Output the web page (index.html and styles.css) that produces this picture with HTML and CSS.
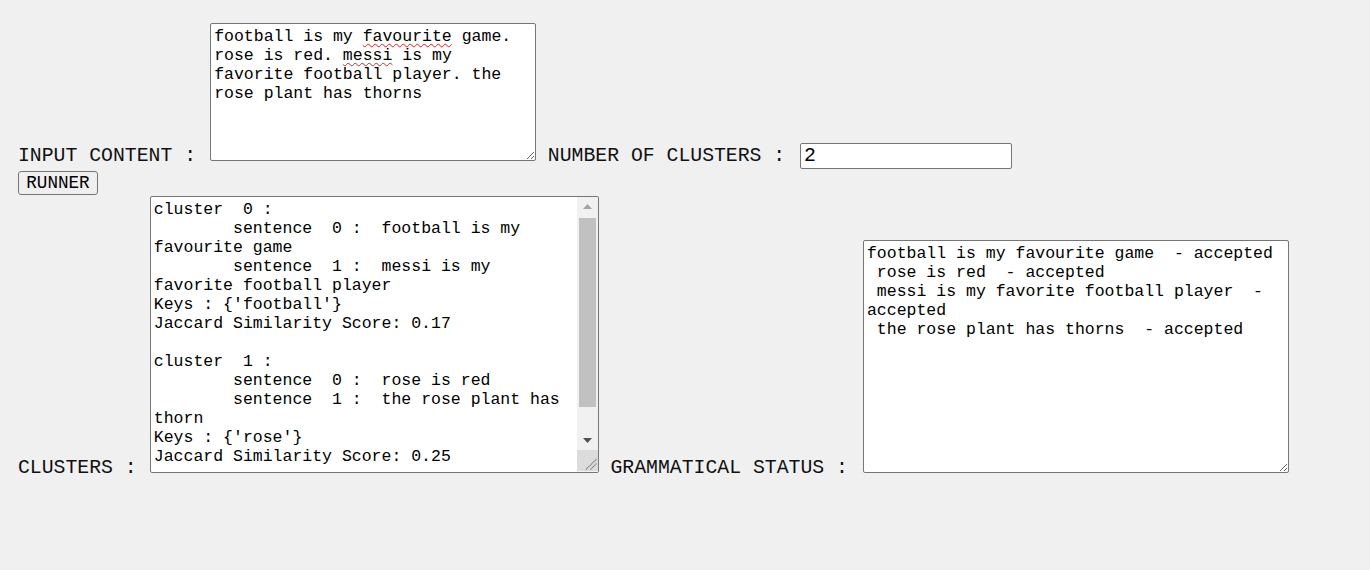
FILE: index.html
```html
<!DOCTYPE html>
<html lang="en">
<head>
<meta charset="utf-8">
<title>Sentence Clustering</title>
<link rel="stylesheet" href="styles.css">
</head>
<body>
<form class="page">
  <div class="row row-input">
    <label class="label">INPUT CONTENT :</label>
    <div class="box box-content">football is my <span class="typo">favourite</span> game. rose is red. <span class="typo">messi</span> is my favorite football player. the rose plant has thorns</div>
    <label class="label">NUMBER OF CLUSTERS :</label>
    <input class="num" type="text" value="2">
  </div>
  <div class="row-btn"><button class="btn" type="button">RUNNER</button></div>
  <div class="row row-output">
    <label class="label">CLUSTERS :</label>
    <div class="box box-clusters">
      <div class="cl-inner">
        <div class="cl-text">cluster  0 :
&#9;sentence  0 :  football is my favourite game
&#9;sentence  1 :  messi is my favorite football player
Keys : {'football'}
Jaccard Similarity Score: 0.17

cluster  1 :
&#9;sentence  0 :  rose is red
&#9;sentence  1 :  the rose plant has thorn
Keys : {'rose'}
Jaccard Similarity Score: 0.25</div>
        <div class="scrollbar">
          <div class="sb-btn"><svg width="9" height="5" viewBox="0 0 9 5"><path d="M0 5 L4.5 0 L9 5 Z" fill="#a3a3a3"/></svg></div>
          <div class="sb-track"><div class="sb-thumb"></div></div>
          <div class="sb-btn"><svg width="9" height="5" viewBox="0 0 9 5"><path d="M0 0 L9 0 L4.5 5 Z" fill="#505050"/></svg></div>
          <div class="sb-corner"><svg width="21" height="21" viewBox="0 0 21 21"><path d="M9 19.5 L19.5 9 M13.5 19.5 L19.5 13.5" stroke="#6a6a6a" stroke-width="1.1" stroke-dasharray="1.2 0.6" fill="none"/></svg></div>
        </div>
      </div>
    </div>
    <label class="label">GRAMMATICAL STATUS :</label>
    <textarea class="box box-status" spellcheck="false">football is my favourite game  - accepted
 rose is red  - accepted
 messi is my favorite football player  - accepted
 the rose plant has thorns  - accepted</textarea>
  </div>
</form>
</body>
</html>
```
FILE: styles.css
```css
html, body {
  margin: 0;
  background: #f0f0f0;
}

.page {
  margin: 0;
  padding: 23px 18px 0 18px;
  font-family: "Liberation Mono", "Courier New", monospace;
  font-size: 19.8px;
  color: #000;
}

.label {
  font-size: 19.8px;
  color: #111;
}

.box {
  box-sizing: border-box;
  display: inline-block;
  margin: 0 0 0 2px;
  padding: 3.2px 2.2px 1.2px 3.2px;
  border: 1px solid #767676;
  border-radius: 2px;
  background: #fff;
  color: #000;
  font-family: "Liberation Mono", "Courier New", monospace;
  font-size: 16.5px;
  line-height: 19px;
  white-space: pre-wrap;
  word-wrap: break-word;
  tab-size: 8;
  vertical-align: baseline;
  outline: none;
}

.box-content {
  width: 326px;
  height: 138px;
  overflow: auto;
  resize: both;
}

.typo {
  text-decoration: underline wavy #e02020;
  text-decoration-thickness: 1px;
  text-underline-offset: 2px;
}

.box-clusters {
  width: 449px;
  height: 277px;
  margin-left: 1px;
  padding: 0;
  overflow: hidden;
  white-space: normal;
}

.cl-inner {
  display: flex;
  height: 100%;
  white-space: normal;
}

.cl-text {
  flex: 1;
  min-width: 0;
  padding: 3.2px 2.2px 1.2px 3.2px;
  overflow: hidden;
  white-space: pre-wrap;
}

.scrollbar {
  display: flex;
  flex-direction: column;
  width: 21px;
  flex: none;
  background: #f1f1f1;
}

.sb-btn {
  display: flex;
  align-items: center;
  justify-content: center;
  height: 19px;
  flex: none;
}

.sb-btn svg {
  display: block;
}

.sb-track {
  flex: 1;
  padding: 2px 2px 0 2px;
}

.sb-thumb {
  height: 189px;
  background: #c1c1c1;
}

.sb-corner {
  height: 21px;
  flex: none;
  margin-bottom: 1px;
  background: #dcdcdc;
}

.sb-corner svg {
  display: block;
}

.box-status {
  width: 426px;
  height: 233px;
  margin-left: 3px;
  overflow: auto;
  resize: both;
}

.num {
  box-sizing: border-box;
  width: 212px;
  height: 26px;
  margin: 0 0 0 3px;
  padding: 1px 3px;
  border: 1px solid #767676;
  border-radius: 2px;
  background: #fff;
  color: #000;
  font-family: "Liberation Mono", "Courier New", monospace;
  font-size: 19.8px;
  vertical-align: baseline;
  outline: none;
}

.row-btn {
  margin-top: 2px;
  margin-bottom: 1px;
}

.btn {
  display: block;
  box-sizing: border-box;
  width: 80px;
  height: 24px;
  margin: 0;
  padding: 0;
  border: 1px solid #767676;
  border-radius: 3px;
  background: #efefef;
  color: #000;
  font-family: "Liberation Mono", "Courier New", monospace;
  font-size: 17.6px;
  line-height: 22px;
}
```
